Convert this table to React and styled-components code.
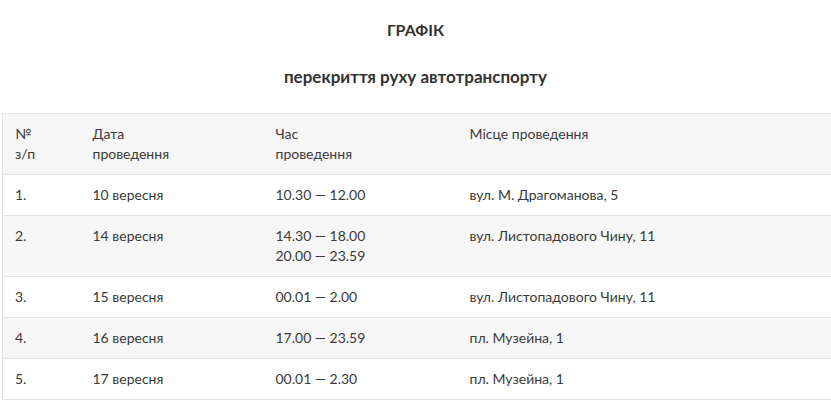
import React from 'react';
import styled, { createGlobalStyle } from 'styled-components';

const GlobalStyle = createGlobalStyle`
  html, body {
    margin: 0;
    padding: 0;
    background: #fff;
    overflow-x: hidden;
  }
  body {
    font-family: 'Lato', 'Open Sans', sans-serif;
    color: #3a3a3a;
  }
`;

const rows = [
  { num: '1.', date: '10 вересня', time: ['10.30 — 12.00'], place: 'вул. М. Драгоманова, 5' },
  { num: '2.', date: '14 вересня', time: ['14.30 — 18.00', '20.00 — 23.59'], place: 'вул. Листопадового Чину, 11' },
  { num: '3.', date: '15 вересня', time: ['00.01 — 2.00'], place: 'вул. Листопадового Чину, 11' },
  { num: '4.', date: '16 вересня', time: ['17.00 — 23.59'], place: 'пл. Музейна, 1' },
  { num: '5.', date: '17 вересня', time: ['00.01 — 2.30'], place: 'пл. Музейна, 1' },
];

function App() {
  return (
    <Page>
      <GlobalStyle />
      <Title>ГРАФІК</Title>
      <Subtitle>перекриття руху автотранспорту</Subtitle>
      <TableWrap>
        <Table>
          <colgroup>
            <col style={{ width: 78 }} />
            <col style={{ width: 183 }} />
            <col style={{ width: 194 }} />
            <col />
          </colgroup>
          <thead>
            <Row $shaded>
              <Cell as="th">№<br />з/п</Cell>
              <Cell as="th">Дата<br />проведення</Cell>
              <Cell as="th">Час<br />проведення</Cell>
              <Cell as="th">Місце проведення</Cell>
            </Row>
          </thead>
          <tbody>
            {rows.map((r, i) => (
              <Row key={r.num} $shaded={i % 2 === 1}>
                <Cell>{r.num}</Cell>
                <Cell>{r.date}</Cell>
                <Cell>
                  {r.time.map((t) => (
                    <Line key={t}>{t}</Line>
                  ))}
                </Cell>
                <Cell>{r.place}</Cell>
              </Row>
            ))}
          </tbody>
        </Table>
      </TableWrap>
    </Page>
  );
}

export default App;

const Page = styled.div`
  display: flex;
  flex-direction: column;
  align-items: stretch;
  padding-top: 19px;
`;

const Title = styled.h2`
  margin: 0;
  font-size: 16px;
  line-height: 22px;
  font-weight: 700;
  text-align: center;
  color: #333;
`;

const Subtitle = styled.h3`
  margin: 25px 0 25px;
  font-size: 17px;
  line-height: 22px;
  font-weight: 700;
  text-align: center;
  color: #333;
`;

const TableWrap = styled.div`
  padding-left: 2px;
`;

const Table = styled.table`
  width: calc(100% + 10px);
  border-collapse: collapse;
  table-layout: fixed;
  border: 1px solid #e4e4e4;
  font-size: 14px;
  line-height: 20px;
`;

const Row = styled.tr`
  background: ${(p) => (p.$shaded ? '#f7f7f7' : '#fff')};
  border-bottom: 1px solid #e4e4e4;
`;

const Cell = styled.td`
  padding: 10px 12px;
  text-align: left;
  vertical-align: top;
  font-weight: 400;
  color: #3a3a3a;
`;

const Line = styled.div``;
